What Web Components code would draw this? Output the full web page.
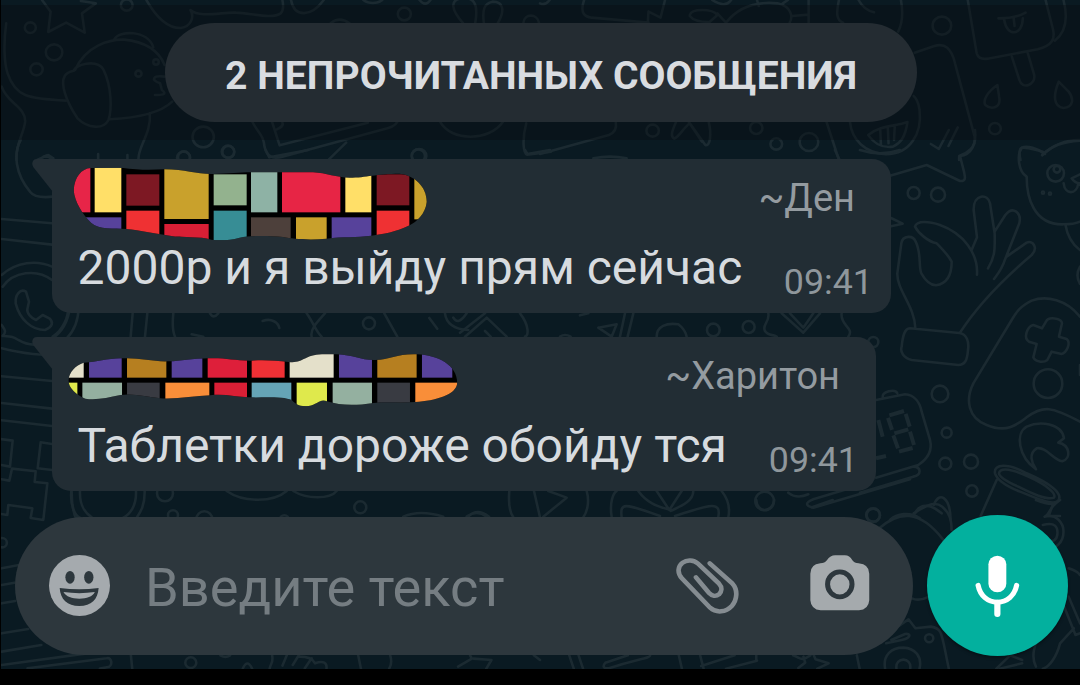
<!DOCTYPE html>
<html lang="ru">
<head>
<meta charset="utf-8">
<title>Чат</title>
<style>
    body {
        margin: 0;
        background: #000;
        font-family: Roboto, "Liberation Sans", sans-serif;
    }
</style>
</head>
<body>
<chat-screen>
    <unread-banner slot="top">2 НЕПРОЧИТАННЫХ СООБЩЕНИЯ</unread-banner>
    <chat-message author="~Ден" time="09:41" style="--width: 839px; --mosaic-left: 21px; --mosaic-top: 8px">
        <name-mosaic slot="name" variant="large"></name-mosaic>
        2000р и я выйду прям сейчас
    </chat-message>
    <chat-message author="~Харитон" time="09:41" style="--width: 824px; --mosaic-left: 15px; --mosaic-top: 16px">
        <name-mosaic slot="name" variant="small"></name-mosaic>
        Таблетки дороже обойду тся
    </chat-message>
    <chat-composer slot="bottom" placeholder="Введите текст"></chat-composer>
</chat-screen>

<script>
class ChatWallpaper extends HTMLElement {
    constructor() {
        super();
        this.attachShadow({ mode: "open" });
    }

    connectedCallback() {
        // each group is one part of the doodle sheet, drawn at about 3x
        this.shadowRoot.innerHTML = `
        <style>
            :host { display: block; }
            svg { display: block; width: 100%; height: 100%; }
            svg * { vector-effect: non-scaling-stroke; }
        </style>
        <svg viewBox="0 0 1080 669" fill="none" stroke="#1b2a31" stroke-width="2.600" stroke-linecap="round" stroke-linejoin="round">
            <g transform="scale(.3444 .3333)">
                <path d="M122 0 147 35 140 96 192 68 246 98 238 40 278 10 235 3"/>
                <circle cx="368" cy="15" r="17"/><circle cx="88" cy="83" r="16"/>
                <circle cx="157" cy="157" r="24"/><circle cx="106" cy="208" r="18"/>
                <path d="M425 0C450 45 485 85 525 84 555 80 565 50 553 30 580 55 650 35 685 38 730 40 790 58 815 40 825 30 822 10 820 0M845 0C855 55 905 50 940 0"/>
                <path d="M18 70C10 130 12 190 22 220 45 290 80 296 192 302M5 260C20 310 75 320 73 365 70 400 45 430 48 480"/>
                <path d="M218 210C250 135 320 118 360 119 420 125 460 150 478 195M332 118C345 90 430 90 445 142M215 212C215 195 280 175 300 208 325 260 325 330 315 360 300 390 255 385 225 355 190 300 175 250 188 228 195 215 210 214 215 212ZM318 358C380 355 460 345 500 305M435 340C440 400 400 440 402 478"/>
                <circle cx="402" cy="221" r="9"/><circle cx="453" cy="186" r="8"/>
                <path d="M478 230C445 225 435 240 465 250L470 270C490 285 465 285 450 285"/>
                <circle cx="590" cy="411" r="31"/><circle cx="662" cy="455" r="18"/><circle cx="533" cy="474" r="19"/><circle cx="1217" cy="468" r="21"/>
                <path d="M733 366C750 400 765 405 768 440 775 470 790 478 820 470L1125 385C1145 380 1155 370 1158 355M790 366 812 436 1068 368M820 368C825 380 810 385 800 390M1005 428 955 478"/>
                <path d="M1278 366C1310 425 1420 425 1460 366M1528 370C1515 420 1520 460 1530 464L1600 455"/>
                <circle cx="1174" cy="42" r="19"/><path d="M960 70Q985 48 1015 70M1520 68C1522 40 1560 40 1565 68"/>
                <path d="M1345 70C1310 30 1305 0 1340-5 1375-10 1390 10 1380 68M1405 70C1400 30 1405 10 1430 5 1465 5 1465 35 1445 70M1055 0C1070 12 1095 12 1110 0M1218 0Q1235 22 1250 0"/>
                <path d="M108 480 135 467 155 480M285 462V480M370 465V480"/>
            </g>
            <g transform="translate(540 0) scale(.3444 .3333)">
                <path d="M0 10Q15 18 28 0M128 0C115 40 130 50 150 53L315 68M315 35 313 68M315 35 350 53 363 0M435 45C440 25 500 25 515 45L490 68M515 40 540 68M500 0C530 20 545 15 555 0M630 0 635 18M720 0 705 10M540 68C580 15 640 5 690 10 730 20 735 50 725 68M732 48 780 44M780 0V68M868 0C860 40 860 60 880 68M925 0Q940 30 970 37M1048 0C1055 40 1050 75 1040 95M435 48C445 62 465 66 490 66"/>
                <path d="M1088 158 1145 138C1175 128 1195 145 1205 190L1262 410C1268 440 1240 460 1217 468V480M832 366 868 480M900 366C905 420 945 460 1005 463 1075 462 1110 400 1102 330 1100 305 1088 290 1085 288M953 405C990 375 1030 380 1067 366 1060 415 1045 430 1025 440 990 445 970 430 953 405ZM988 390 990 435M1010 385 1012 430M1030 380 1028 420M1135 432 1158 447 1187 390M1186 438 1213 382"/>
                <circle cx="1167" cy="77" r="27"/><circle cx="1321" cy="386" r="17"/><circle cx="327" cy="392" r="18"/><circle cx="628" cy="384" r="18"/><circle cx="686" cy="432" r="17"/><circle cx="781" cy="426" r="27"/>
                <path d="M1242 0 1268 160Q1274 180 1300 176L1445 148C1490 135 1495 115 1490 90L1468 0M1520 0C1530 40 1535 90 1495 122M1331 55C1360 55 1390 50 1410 38M1348 60C1355 110 1400 110 1402 55M1375 52 1378 78M1370 170 1392 240C1400 270 1440 255 1435 225L1415 155"/>
                <path d="M1328 255C1300 275 1285 300 1293 315 1310 330 1340 325 1333 290ZM1506 245C1490 285 1490 320 1520 324 1550 322 1550 295 1535 275Z"/>
                <path d="M0 462 200 405Q225 395 220 366M395 366C380 400 380 410 390 416 405 410 415 385 435 370L480 435C495 440 498 400 490 366M432 366 470 425"/>
                <path d="M1395 480C1385 430 1400 440 1460 455M1458 466C1480 440 1520 425 1568 422"/>
            </g>
            <g transform="translate(460 150) scale(.3333)">
                <path d="M195 0 202 12 270 0M400 25Q450 15 500 25M1125 0 1138 28M1200 0Q1260 20 1320 0"/>
            </g>
            <g transform="translate(30 150) scale(.3333)">
                <path d="M707 0 718 22 835 0"/><circle cx="595" cy="6" r="18"/><circle cx="462" cy="22" r="18"/><circle cx="1165" cy="18" r="20"/>
            </g>
            <g transform="translate(860 130) scale(.3333)">
                <path d="M90 137 200 105 300 153C320 155 315 140 312 125L300 78C335 75 350 40 345 0"/>
                <circle cx="161" cy="189" r="18"/><circle cx="234" cy="194" r="21"/><circle cx="240" cy="792" r="25"/><circle cx="260" cy="908" r="15"/><circle cx="256" cy="1001" r="18"/><circle cx="333" cy="995" r="21"/><circle cx="336" cy="1083" r="17"/><circle cx="40" cy="1156" r="20"/><circle cx="40" cy="636" r="15"/>
                <path d="M93 264 128 281 93 289"/>
                <path d="M166 595C165 530 110 480 112 430L124 340C128 315 160 315 167 335 185 370 175 410 184 430 195 450 210 465 228 466 265 460 275 430 275 395 265 375 245 355 230 340 205 335 175 310 165 290 170 270 210 275 240 285 310 310 355 370 351 434M335 360 351 322 341 240C340 190 385 190 390 220L404 310C405 360 405 380 384 415M404 305 436 255C460 225 485 250 478 280L436 386C425 420 415 430 402 447M440 380 500 338C520 330 535 355 515 375 450 430 360 515 300 608M150 595 298 609C320 612 328 635 324 660 322 690 315 705 295 705L155 690C130 685 120 665 125 650 128 620 133 595 150 595Z"/>
                <path d="M660 30C610 28 575 50 547 74M555 72C535 55 500 45 485 53 470 75 475 125 500 140 500 200 520 285 610 283 635 283 650 280 660 275M616 283Q625 335 660 360M611 160C615 195 650 195 655 160L660 165M660 133 635 145Q645 160 660 160"/>
                <circle cx="587" cy="130" r="25"/><circle cx="591" cy="118" r="10"/><circle cx="549" cy="188" r="3"/><circle cx="570" cy="191" r="3"/>
                <path d="M660 560C620 510 560 495 515 512 480 530 470 545 455 570L340 760C315 810 325 865 380 885 440 910 470 885 500 862 550 825 575 830 660 875M660 410Q645 435 660 462M660 705V735"/>
                <path d="M558 575C565 558 605 565 606 580L597 620 620 627C635 640 618 670 605 672L575 665 562 690C550 700 525 695 520 682L530 642 507 635C490 625 500 590 520 585L546 595Z"/>
                <circle cx="564" cy="761" r="43"/>
                <path d="M528 1018C475 980 465 910 500 890 540 872 605 880 612 925L595 938C630 945 635 985 607 994 580 990 560 950 530 955 505 970 515 1000 528 1018Z"/>
                <path d="M405 1030C400 1000 445 1000 500 1030 570 1060 610 1090 595 1112 580 1130 520 1100 480 1085 430 1065 410 1045 405 1030ZM417 1030C420 1010 460 1018 505 1040 560 1065 590 1090 582 1103 560 1112 515 1090 475 1070 435 1052 418 1040 417 1030ZM410 1050 362 1158M580 1120 566 1158H600"/>
                <path d="M48 810 135 793C165 795 180 820 185 845L210 930C220 970 190 995 175 1005L48 1043M68 803C65 785 105 775 112 790M0 1088 160 1040C185 1035 185 1012 160 1010"/>
                <path stroke-width="4" stroke-linecap="butt" d="M88 856 132 843M137 852 149 890M84 864 96 900M103 910 145 898M150 905 162 945M100 916 114 955M117 965 158 954M55 870 68 920M48 985 78 978"/>
                <path d="M165 1150C180 1120 210 1120 245 1150M222 1125C235 1085 270 1095 272 1170M90 1170C110 1150 150 1145 180 1165"/>
            </g>
            <g transform="translate(0 140) scale(.3333)">
                <path d="M62 0C40 40 45 100 90 155 105 175 140 172 158 170M5 237 156 250M5 297 156 314M5 405C50 365 110 360 156 380M8 440C40 395 110 385 156 420M5 555C15 570 20 575 8 588 35 590 40 590 55 600 120 640 200 590 210 500M5 625C60 640 150 650 158 640M158 590C190 570 205 530 205 500M236 500Q235 560 200 595"/>
                <path d="M78 455C60 445 45 465 47 490 60 540 95 570 135 570 160 560 160 545 148 535L128 525 108 540C95 535 80 520 82 508L87 485Z"/>
                <path d="M5 709 156 723M5 789 156 806M5 841 156 858M0 897 38 902 30 980 4 975M156 912 122 907 113 985 156 990M5 1018 28 1022 36 986 107 994 104 1026 142 1030 130 1140 92 1134 97 1105 25 1095 22 1125 4 1122M215 1055C215 1085 220 1120 230 1140M130 50 145 45 160 55"/>
            </g>
            <g transform="translate(50 306) scale(.3333)">
                <path d="M248 22 242 92M292 22 285 92M370 22Q365 70 375 92M425 85 460 92M638 45C665 35 685 50 688 66M770 22C790 50 800 80 815 92M825 22C800 50 780 70 785 92M480 22Q490 40 505 22M1003 22 1042 92M1138 36 1162 68M1185 22C1190 60 1220 70 1255 72M1210 35Q1225 60 1250 22"/>
                <circle cx="957" cy="52" r="18"/><circle cx="931" cy="604" r="18"/><circle cx="345" cy="562" r="24"/><circle cx="703" cy="642" r="14"/><circle cx="369" cy="628" r="15"/><circle cx="463" cy="640" r="24"/>
                <path d="M64 555C60 600 75 630 90 635M90 555C88 600 105 620 125 634M258 555C260 600 240 625 220 635M284 555C285 600 270 620 260 635M530 555C580 590 670 590 710 555M730 555C770 580 840 580 860 555M1060 632Q1110 610 1180 632"/>
            </g>
            <g transform="translate(460 306) scale(.3333)">
                <path d="M0 80 75 22M15 92 80 35 140 92M75 75 92 92M180 22C210 60 205 92 195 92M360 28 385 22M415 65 470 55 455 92 415 65M495 22 480 92M520 22 503 92M590 92C590 60 620 50 655 55 675 70 680 92 680 92M925 22C930 50 905 55 915 75 925 90 940 85 950 92M965 22 1030 80 1080 22M990 22 1030 65 1060 22M1145 22C1140 60 1185 65 1165 92"/>
                <circle cx="760" cy="72" r="19"/><circle cx="866" cy="63" r="18"/><circle cx="914" cy="585" r="28"/><path d="M300 92Q315 82 332 92"/>
                <path d="M148 555C145 590 150 620 160 634M380 555C390 590 380 620 370 634M222 555 240 634M265 555 320 575 250 632M455 632C448 590 460 560 470 555M485 634C480 590 490 590 600 630M535 555C560 590 590 600 625 610M590 555 628 612 665 555M700 555C700 590 650 605 632 615M645 630C740 600 785 580 775 632M785 555C805 580 810 610 805 634M985 560Q1010 580 1045 565M1200 538 1060 580C1035 590 1035 600 1060 605L1350 520M20 632Q50 610 80 632"/>
            </g>
            <g transform="translate(0 500) scale(.3444 .3333)">
                <path d="M5 205 55 195M5 255 42 248M5 310 44 303M5 400 82 387M5 455 120 435M5 495 290 455M80 505 310 475C325 470 330 500 310 502L290 506M380 465 384 506M1360 50Q1385 22 1420 50"/>
                <circle cx="6" cy="128" r="14"/><circle cx="554" cy="488" r="16"/><path d="M705 506Q718 475 732 506M640 466Q655 475 668 466M1550 466 1568 480"/>
                <path d="M783 506C785 490 795 490 790 465M833 465 820 497M868 465 850 495M905 475 885 505M870 470C900 470 910 480 915 490 940 480 950 490 948 506M1040 466 1048 506M1133 466Q1140 490 1130 506M1330 500 1370 476 1365 466M1375 476 1427 480 1412 506"/>
            </g>
            <g transform="translate(540 500) scale(.3444 .3333)">
                <path d="M985 85C1040 35 1100 25 1170 118M1085 40C1130 10 1150 5 1168 20 1190 40 1195 60 1195 90M1440 0C1490 20 1500 10 1510 0M1498 10C1475 30 1480 45 1465 50 1500 40 1520 70 1520 95 1520 130 1495 145 1480 145M1460 75C1495 65 1505 80 1502 105 1500 120 1490 125 1480 122M1535 205C1550 210 1562 215 1568 225M1080 295Q1100 305 1130 290M1522 320 1555 405 1568 400M1535 290 1568 370M1550 385 1510 430M1510 430C1500 470 1480 500 1460 506M1455 400C1435 430 1425 470 1440 500M1010 400 1070 358 1090 385 1135 380C1170 385 1165 400 1187 506M1020 420 1060 402C1080 400 1075 415 1050 420L1005 430M920 466 928 506M628 0C630 40 675 40 680 0M850 0 790 22"/>
                <circle cx="967" cy="45" r="20"/><circle cx="1130" cy="415" r="12"/>
                <path d="M1002 506C995 465 1020 443 1055 443 1090 445 1110 470 1102 506M1035 506C1030 470 1080 470 1075 506M85 466 98 506M112 466 125 506M190 488 255 466M320 466C320 475 290 475 200 505 185 506 180 500 190 488M403 466 412 506M465 466 475 506M565 466 468 498M630 482 540 506M628 480V466M735 466C760 475 755 485 785 466M765 470 770 488 750 504M795 466 800 478 838 490 805 506M1325 506 1365 466 1400 480M1335 506 1400 490"/>
            </g>
        </svg>`;
    }
}

class ChatScreen extends HTMLElement {
    constructor() {
        super();
        this.attachShadow({ mode: "open" });
    }

    connectedCallback() {
        this.shadowRoot.innerHTML = `
        <style>
            :host {
                display: flex;
                flex-direction: column;
                position: relative;
                box-sizing: border-box;
                width: 1080px;
                height: 669px;
                overflow: hidden;
                background: #0a1a22;
                border-left: 1px solid #000;
            }
            chat-wallpaper {
                position: absolute;
                inset: 0 0 0 -1px;
            }
            .top, .list, .bottom { position: relative; }
            .list {
                display: flex;
                flex-direction: column;
                gap: 24px;
                padding: 19px 0 0 51px;
            }
            .bottom { margin-top: 24px; }
        </style>
        <chat-wallpaper></chat-wallpaper>
        <div class="top"><slot name="top"></slot></div>
        <div class="list"><slot></slot></div>
        <div class="bottom"><slot name="bottom"></slot></div>`;
    }
}

class UnreadBanner extends HTMLElement {
    constructor() {
        super();
        this.attachShadow({ mode: "open" });
    }

    connectedCallback() {
        this.shadowRoot.innerHTML = `
        <style>
            :host {
                display: flex;
                justify-content: center;
                box-sizing: border-box;
                height: 135px;
                margin-top: 5px;
                padding-top: 18px;
                background: rgba(8, 12, 17, .4);
            }
            .pill {
                box-sizing: border-box;
                width: 752px;
                height: 99px;
                padding: 5px 0 0 1px;
                border-radius: 50px;
                background: #242c32;
                color: #d9dce0;
                font-size: 39.1px;
                font-weight: 700;
                line-height: 96px;
                text-align: center;
                white-space: nowrap;
            }
        </style>
        <div class="pill"><slot></slot></div>`;
    }
}

class ChatMessage extends HTMLElement {
    constructor() {
        super();
        this.attachShadow({ mode: "open" });
    }

    connectedCallback() {
        this.shadowRoot.innerHTML = `
        <style>
            :host {
                display: block;
                position: relative;
                width: var(--width);
                height: 154px;
                border-radius: 0 19px 19px 19px;
                background: #222d34;
                white-space: nowrap;
            }
            .tail {
                position: absolute;
                left: -20px;
                top: 0;
            }
            .head {
                display: flex;
                justify-content: space-between;
                align-items: flex-start;
                height: 76px;
                padding: 0 36px 0 var(--mosaic-left);
            }
            .name { margin-top: var(--mosaic-top); }
            .author {
                padding-top: 1px;
                color: #949ba0;
                font-size: 38px;
                line-height: 76px;
            }
            .body {
                display: flex;
                justify-content: space-between;
                align-items: flex-start;
                padding: 0 18px 0 25.5px;
                line-height: 66px;
            }
            .text {
                color: #d7dbdf;
                font-size: 48px;
            }
            .time {
                margin-top: 14px;
                color: #8f979c;
                font-size: 35.8px;
            }
        </style>
        <svg class="tail" width="21" height="34" viewBox="0 0 21 34"><path fill="#222d34" d="M21 0H5C0 0-1 5 2 9L21 33Z"/></svg>
        <div class="head">
            <div class="name"><slot name="name"></slot></div>
            <div class="author">${this.getAttribute("author")}</div>
        </div>
        <div class="body">
            <div class="text"><slot></slot></div>
            <div class="time">${this.getAttribute("time")}</div>
        </div>`;
    }
}

// tiles are [x, y, width, height, colour] inside the brush outline
const MOSAICS = {
    large: {
        box: [130, 50, 1065, 222],
        outline: "M183 53 275 52C330 60 365 58 403 57 470 58 500 72 550 71 600 70 630 66 663 66H850C890 68 920 82 960 82 1010 82 1040 70 1110 70 1155 75 1192 110 1191 155 1188 190 1160 215 1140 225 1100 245 1060 252 1025 256 980 262 940 258 890 265 840 270 790 266 760 260 710 255 660 256 630 262 600 270 570 272 545 268 510 258 460 262 430 258 380 250 330 240 290 236 250 234 210 238 185 218 160 195 135 155 132 120 135 80 155 55 183 53Z",
        tiles: [
            [120, 45, 62, 141, "#e72548"], [195, 45, 80, 141, "#ffdf68"], [290, 72, 99, 94, "#7d1823"],
            [404, 45, 133, 161, "#c9a12c"], [552, 72, 99, 93, "#93b28e"], [664, 45, 79, 141, "#8eb2a5"],
            [757, 45, 175, 141, "#e72545"], [947, 45, 78, 141, "#ffdf68"], [1041, 72, 98, 93, "#7d1823"],
            [1154, 45, 45, 162, "#c9a12c"], [120, 201, 155, 60, "#57429b"], [290, 181, 99, 90, "#ef3133"],
            [404, 221, 133, 60, "#d91f35"], [552, 181, 99, 100, "#378d95"], [664, 201, 119, 80, "#4d403b"],
            [799, 201, 92, 80, "#c9a12c"], [906, 201, 119, 70, "#57429b"], [1041, 181, 98, 80, "#ef3133"]
        ]
    },
    small: {
        box: [110, 68, 1175, 164],
        outline: "M160 97C205 96 230 82 285 84 330 83 370 95 415 93 455 93 490 82 550 84 590 84 620 92 665 91 700 88 735 91 775 95 820 100 820 74 875 72H920C970 74 990 90 1035 89 1080 88 1100 70 1160 72 1225 75 1280 105 1281 157 1278 195 1215 210 1155 215 1110 218 1070 214 1030 218 970 227 930 225 890 213 870 203 860 223 835 227 810 230 795 222 785 210 760 198 710 202 655 201 620 200 580 190 540 195 490 197 440 207 390 204 350 200 310 188 270 194 230 202 200 210 165 205 140 195 115 175 114 150 117 125 135 105 160 97Z",
        tiles: [
            [105, 60, 55, 82, "#e4e0ca"], [176, 60, 98, 82, "#57429b"], [290, 60, 118, 82, "#b67f20"],
            [424, 60, 92, 82, "#57429b"], [532, 60, 118, 82, "#de1f3a"], [664, 60, 99, 82, "#ef3035"],
            [778, 60, 132, 82, "#e4e0ca"], [926, 60, 99, 82, "#57429b"], [1041, 60, 118, 82, "#b67f20"],
            [1175, 60, 91, 82, "#57429b"], [105, 157, 36, 80, "#dfe94c"], [156, 157, 119, 80, "#94b0a0"],
            [290, 157, 98, 80, "#393b42"], [405, 157, 132, 80, "#f98e39"], [552, 157, 98, 80, "#d91f35"],
            [664, 157, 119, 80, "#65a4b6"], [799, 157, 91, 80, "#dfe94c"], [907, 157, 118, 80, "#94b0a0"],
            [1041, 157, 98, 80, "#393b42"], [1155, 157, 130, 80, "#f98e39"]
        ]
    }
};

class NameMosaic extends HTMLElement {
    constructor() {
        super();
        this.attachShadow({ mode: "open" });
    }

    connectedCallback() {
        const { box, outline, tiles } = MOSAICS[this.getAttribute("variant")];
        const rects = tiles.map(([x, y, w, h, fill]) =>
            `<rect x="${x}" y="${y}" width="${w}" height="${h}" fill="${fill}"/>`).join("");

        this.shadowRoot.innerHTML = `
        <style>
            :host, svg { display: block; }
        </style>
        <svg width="${box[2] / 3}" height="${box[3] / 3}" viewBox="${box.join(" ")}">
            <clipPath id="brush"><path d="${outline}"/></clipPath>
            <g clip-path="url(#brush)">
                <rect x="100" y="40" width="1200" height="240"/>
                ${rects}
            </g>
        </svg>`;
    }
}

class ChatComposer extends HTMLElement {
    constructor() {
        super();
        this.attachShadow({ mode: "open" });
    }

    connectedCallback() {
        this.shadowRoot.innerHTML = `
        <style>
            :host {
                display: flex;
                align-items: center;
                gap: 14px;
                padding-left: 14px;
            }
            .field {
                display: flex;
                align-items: center;
                box-sizing: border-box;
                width: 898px;
                height: 138px;
                padding: 0 43.5px 0 34px;
                border-radius: 69px;
                background: #2d373d;
            }
            .placeholder {
                flex: 1;
                margin: 5px 0 0 35px;
                color: #757d82;
                font-size: 54.2px;
                line-height: 70px;
                white-space: nowrap;
            }
            .clip { margin-right: 71px; }
            .camera { margin-top: -5px; }
            .mic {
                display: flex;
                align-items: center;
                justify-content: center;
                width: 141px;
                height: 141px;
                border-radius: 50%;
                background: #03b09e;
                box-shadow: 0 2px 3px rgba(0, 0, 0, .35);
            }
        </style>
        <div class="field">
            <svg width="61" height="61" viewBox="142 167 177 183" preserveAspectRatio="none">
                <ellipse cx="230.500" cy="258.500" rx="88.500" ry="91.500" fill="#a5aaae"/>
                <g fill="#2d373d">
                    <ellipse cx="203" cy="234" rx="13.500" ry="19"/>
                    <ellipse cx="257.500" cy="234" rx="13.500" ry="19"/>
                    <path d="M173 266Q230 274 286 266C284 300 265 320 230 320 195 320 175 300 173 266Z"/>
                </g>
                <path fill="#a5aaae" d="M184 278Q230 285 275 278C268 292 252 298 230 298 208 298 192 292 184 278Z"/>
            </svg>
            <div class="placeholder">${this.getAttribute("placeholder")}</div>
            <svg class="clip" width="62.700" height="56" viewBox="395 175 182 168" preserveAspectRatio="none" fill="none" stroke="#858c91" stroke-width="13.500" stroke-linecap="round">
                <path d="M493 191 559 252C575 270 573 300 557 319 540 338 512 341 494 324L412 236C398 220 400 200 414 189 427 179 446 180 459 192L520 252C530 263 528 276 520 284 511 291 499 289 491 280L453 233"/>
            </svg>
            <svg class="camera" width="59.600" height="55.700" viewBox="783 164 173 167" preserveAspectRatio="none">
                <path fill="#a5aaad" d="M784 220Q784 192 813 189 826 189 832 180 842 165 856 165H884Q898 165 906 180 912 189 924 189 955 192 955 220V300Q953 328 925 330H814Q786 328 784 300Z"/>
                <ellipse cx="869.500" cy="252" rx="35.500" ry="37.500" fill="none" stroke="#2d373d" stroke-width="14.500"/>
            </svg>
        </div>
        <div class="mic">
            <svg width="44.400" height="62" viewBox="1265 165 129 186" preserveAspectRatio="none" fill="none" stroke="#fff" stroke-linecap="round">
                <rect x="1304" y="167" width="52" height="110" rx="26" fill="#fff" stroke="none"/>
                <path stroke-width="15" d="M1274 256C1280 288 1302 306 1330 307 1358 306 1380 288 1386 256"/>
                <path stroke-width="18" d="M1330 308V342"/>
            </svg>
        </div>`;
    }
}

customElements.define("chat-wallpaper", ChatWallpaper);
customElements.define("chat-screen", ChatScreen);
customElements.define("unread-banner", UnreadBanner);
customElements.define("name-mosaic", NameMosaic);
customElements.define("chat-message", ChatMessage);
customElements.define("chat-composer", ChatComposer);
</script>
</body>
</html>
